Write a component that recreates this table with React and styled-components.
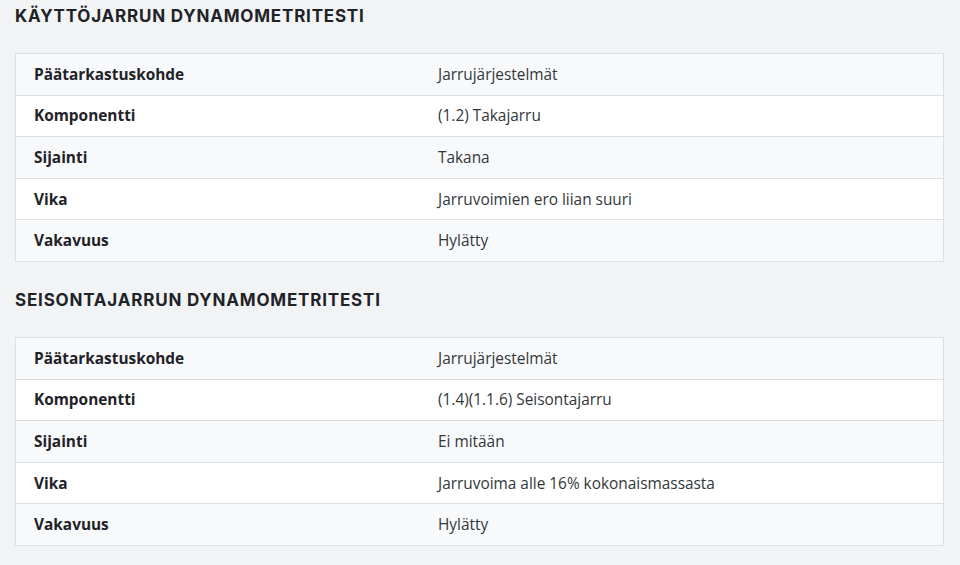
import React from "react";
import styled, { createGlobalStyle } from "styled-components";

const sections = [
    {
        title: "Käyttöjarrun dynamometritesti",
        rows: [
            ["Päätarkastuskohde", "Jarrujärjestelmät"],
            ["Komponentti", "(1.2) Takajarru"],
            ["Sijainti", "Takana"],
            ["Vika", "Jarruvoimien ero liian suuri"],
            ["Vakavuus", "Hylätty"],
        ],
    },
    {
        title: "Seisontajarrun dynamometritesti",
        rows: [
            ["Päätarkastuskohde", "Jarrujärjestelmät"],
            ["Komponentti", "(1.4)(1.1.6) Seisontajarru"],
            ["Sijainti", "Ei mitään"],
            ["Vika", "Jarruvoima alle 16% kokonaismassasta"],
            ["Vakavuus", "Hylätty"],
        ],
    },
];

const App = () => {
    return (
        <>
            <GlobalStyle />
            <Page>
                {sections.map((section) => (
                    <Section key={section.title}>
                        <Heading>{section.title}</Heading>
                        <Table>
                            {section.rows.map(([label, value], i) => (
                                <Row key={label} $striped={i % 2 === 0}>
                                    <Label>{label}</Label>
                                    <Value>{value}</Value>
                                </Row>
                            ))}
                        </Table>
                    </Section>
                ))}
            </Page>
        </>
    );
};

export default App;

const GlobalStyle = createGlobalStyle`
    body {
        margin: 0;
        background: #f2f3f5;
        font-family: "Open Sans", "Liberation Sans", sans-serif;
        color: #212529;
    }
`;

const Page = styled.main`
    display: flex;
    flex-direction: column;
    gap: 28px;
    padding: 6px 16px 20px 15px;
`;

const Section = styled.section`
    display: flex;
    flex-direction: column;
    gap: 27px;
`;

const Heading = styled.h2`
    margin: 0;
    font-family: "Inter", "Liberation Sans", sans-serif;
    font-size: 17px;
    line-height: 20px;
    font-weight: 700;
    text-transform: uppercase;
    letter-spacing: 0.8px;
    color: #1f2328;
`;

const Table = styled.div`
    display: flex;
    flex-direction: column;
    border: 1px solid #dcdfe3;
    background: #fff;
`;

const Row = styled.div`
    display: grid;
    grid-template-columns: 404px 1fr;
    height: 40.6px;
    align-items: center;
    background: ${(p) => (p.$striped ? "#f8f9fa" : "#ffffff")};
    & + & {
        border-top: 1px solid #dcdfe3;
    }
`;

const Label = styled.div`
    padding-left: 18px;
    font-size: 15.4px;
    font-weight: 700;
    color: #1f2328;
`;

const Value = styled.div`
    padding-left: 18px;
    font-size: 15.4px;
    color: #33373b;
`;
